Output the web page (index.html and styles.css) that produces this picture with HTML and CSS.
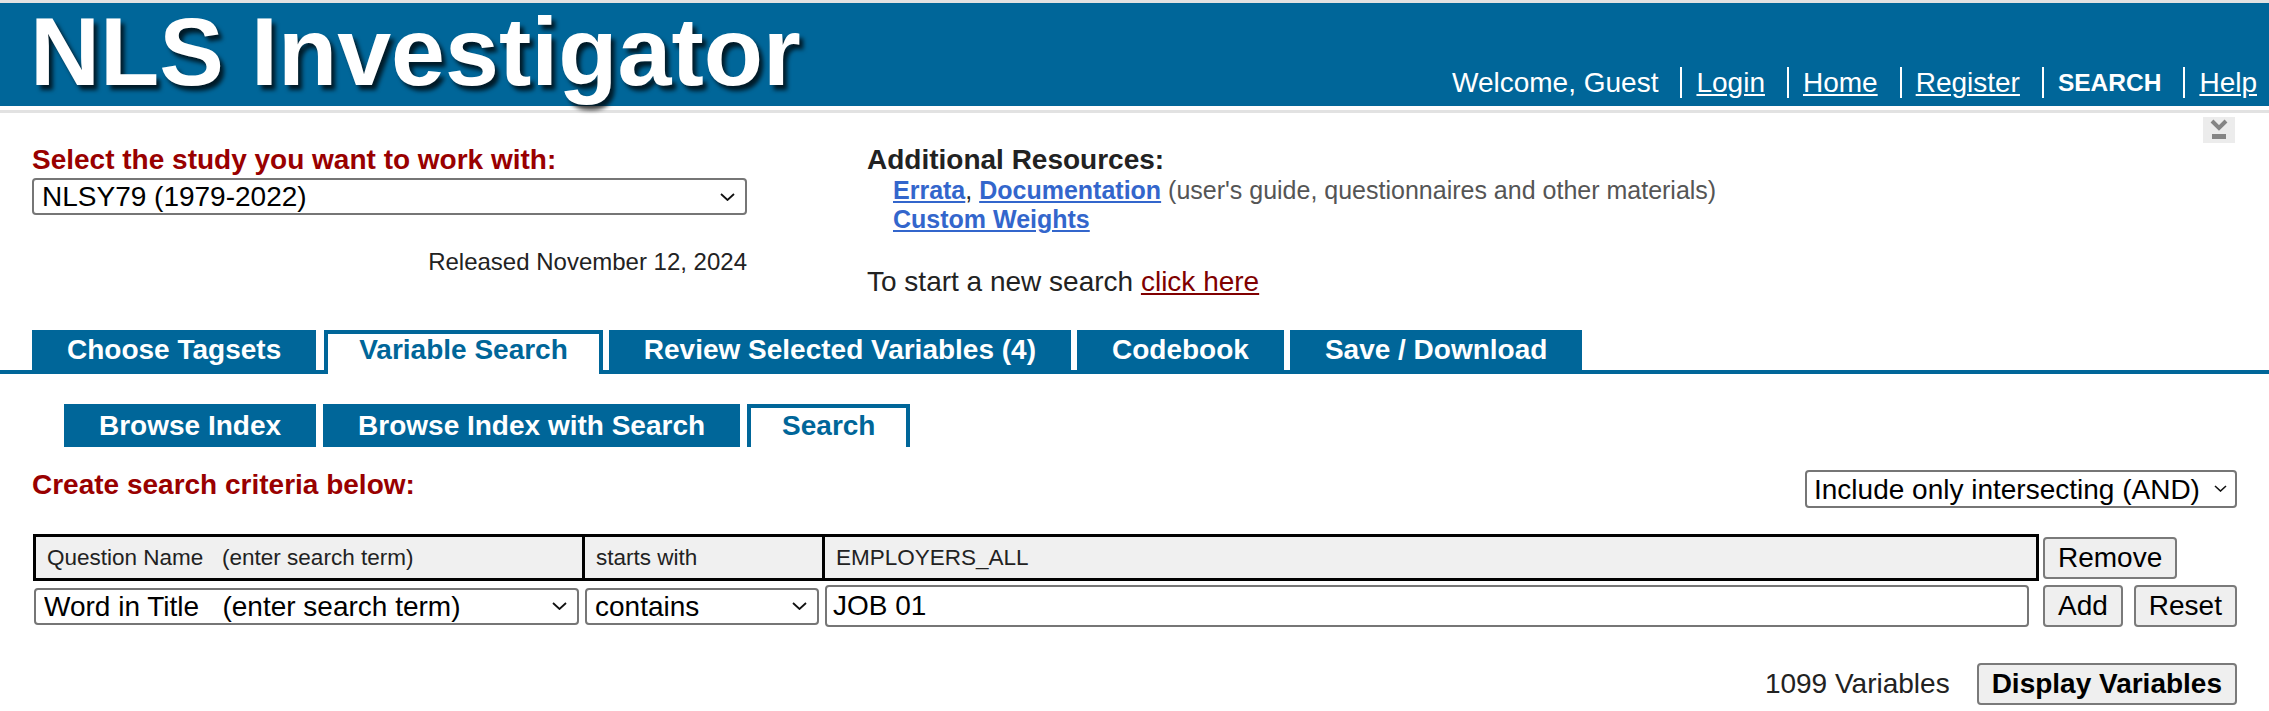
FILE: index.html
```html
<!DOCTYPE html>
<html lang="en">
  <head>
    <meta charset="UTF-8" />
    <title>NLS Investigator</title>
    <link rel="stylesheet" href="styles.css">
  </head>
  <body>
    <header class="masthead">
      <div class="brand">NLS Investigator</div>
      <nav class="usernav">
        <span class="navitem">Welcome, Guest</span>
        <a class="navitem" href="#">Login</a>
        <a class="navitem" href="#">Home</a>
        <a class="navitem" href="#">Register</a>
        <span class="navitem current">SEARCH</span>
        <a class="navitem" href="#">Help</a>
      </nav>
    </header>
    <div class="masthead-rule"></div>
    <div class="toolbar">
      <span class="collapse-btn">
        <svg width="32" height="26" viewBox="0 0 32 26">
          <rect width="32" height="26" fill="#ececec" />
          <path d="M9 4 L16 11 L23 4" fill="none" stroke="#858585" stroke-width="4" />
          <rect x="9" y="17" width="14" height="5" fill="#858585" />
        </svg>
      </span>
    </div>

    <section class="study">
      <div class="study-pick">
        <h3 class="label">Select the study you want to work with:</h3>
        <div class="selectbox study-select">
          <select><option>NLSY79 (1979-2022)</option></select>
          <svg class="chev" width="15" height="8" viewBox="0 0 15 8"><path d="M1 1 L7.5 7 L14 1" fill="none" stroke="#111" stroke-width="1.8" /></svg>
        </div>
        <p class="released">Released November 12, 2024</p>
      </div>
      <div class="resources">
        <h3>Additional Resources:</h3>
        <p class="res-line"><a href="#">Errata</a>, <a href="#">Documentation</a> <span class="note">(user's guide, questionnaires and other materials)</span></p>
        <p class="res-line"><a href="#">Custom Weights</a></p>
        <p class="restart">To start a new search <a href="#">click here</a></p>
      </div>
    </section>

    <ul class="tabs main-tabs">
      <li class="tab">Choose Tagsets</li>
      <li class="tab active">Variable Search</li>
      <li class="tab">Review Selected Variables (4)</li>
      <li class="tab">Codebook</li>
      <li class="tab">Save / Download</li>
    </ul>

    <ul class="tabs sub-tabs">
      <li class="tab">Browse Index</li>
      <li class="tab">Browse Index with Search</li>
      <li class="tab active">Search</li>
    </ul>

    <div class="criteria-head">
      <h3 class="label">Create search criteria below:</h3>
      <div class="selectbox mode-select">
        <select><option>Include only intersecting (AND)</option></select>
        <svg class="chev" width="13" height="7" viewBox="0 0 13 7"><path d="M1 1 L6.5 6 L12 1" fill="none" stroke="#111" stroke-width="1.6" /></svg>
      </div>
    </div>

    <div class="criteria">
      <div class="hcell">Question Name&nbsp;&nbsp; (enter search term)</div>
      <div class="hcell">starts with</div>
      <div class="hcell last">EMPLOYERS_ALL</div>
      <div class="actions"><button>Remove</button></div>

      <div class="selectbox field-select">
        <select><option>Word in Title&nbsp;&nbsp; (enter search term)</option></select>
        <svg class="chev" width="15" height="8" viewBox="0 0 15 8"><path d="M1 1 L7.5 7 L14 1" fill="none" stroke="#111" stroke-width="1.8" /></svg>
      </div>
      <div class="selectbox op-select">
        <select><option>contains</option></select>
        <svg class="chev" width="15" height="8" viewBox="0 0 15 8"><path d="M1 1 L7.5 7 L14 1" fill="none" stroke="#111" stroke-width="1.8" /></svg>
      </div>
      <input class="term" type="text" value="JOB 01" />
      <div class="actions"><button>Add</button><button>Reset</button></div>
    </div>

    <div class="results">
      <span class="count">1099 Variables</span>
      <button class="display-btn">Display Variables</button>
    </div>
  </body>
</html>
```

FILE: styles.css
```css
*{
    margin: 0;
    padding: 0;
    box-sizing: border-box;
}
body{
    font-family: "Liberation Sans", Arial, sans-serif;
    font-size: 28px;
    color: #222;
    background: #fff;
}

/* header */
.masthead{
    height: 106px;
    border-top: 3px solid #e2e2e2;
    background: #006699;
    display: flex;
    justify-content: space-between;
    align-items: flex-end;
}
.brand{
    align-self: flex-start;
    margin-left: 30px;
    padding-top: 1px;
    font-size: 97px;
    line-height: 96px;
    font-weight: bold;
    color: #fff;
    text-shadow: 4px 5px 4px rgba(0,0,0,0.75);
}
.usernav{
    display: flex;
    margin: 0 12px 8px 0;
}
.navitem{
    font-size: 28px;
    line-height: 31px;
    color: #fff;
    padding: 0 22px 0 14px;
    border-left: 2px solid #fff;
}
.navitem:first-child{
    border-left: 0;
}
.navitem:last-child{
    padding-right: 0;
}
.navitem.current{
    font-size: 24.5px;
    font-weight: bold;
}
.masthead-rule{
    height: 3px;
    margin-top: 4px;
    background: #e2e2e2;
}
.toolbar{
    height: 31px;
    padding: 4px 34px 0 0;
    display: flex;
    justify-content: flex-end;
}
.collapse-btn svg{
    display: block;
}

/* study + resources */
.study{
    display: grid;
    grid-template-columns: 715px auto;
    column-gap: 120px;
    padding: 0 32px;
}
.label{
    font-size: 28px;
    line-height: 32px;
    font-weight: bold;
    color: #990000;
}
.selectbox{
    position: relative;
}
.selectbox select{
    appearance: none;
    -webkit-appearance: none;
    width: 100%;
    height: 100%;
    font-family: "Liberation Sans", Arial, sans-serif;
    font-size: 28px;
    color: #000;
    background: #fff;
    border: 2px solid #767676;
    border-radius: 4px;
    padding: 0 40px 0 8px;
}
.chev{
    position: absolute;
    right: 12px;
    top: 50%;
    margin-top: -4px;
    pointer-events: none;
}
.study-select{
    margin-top: 2px;
    height: 37px;
}
.released{
    margin-top: 33px;
    font-size: 24px;
    text-align: right;
}
.resources h3{
    font-size: 28px;
    line-height: 32px;
    font-weight: bold;
}
.res-line{
    font-size: 25px;
    line-height: 29px;
    padding-left: 26px;
}
.res-line a{
    color: #3366cc;
    font-weight: bold;
}
.note{
    color: #555;
}
.restart{
    margin-top: 32px;
    line-height: 32px;
}
.restart a{
    color: #800000;
}

/* tabs */
.tabs{
    list-style: none;
    display: flex;
    align-items: flex-end;
    gap: 6px;
}
.tab{
    background: #006699;
    color: #fff;
    font-weight: bold;
    font-size: 28px;
    padding: 0 35px;
}
.main-tabs{
    margin-top: 32px;
    padding-left: 32px;
    border-bottom: 4px solid #006699;
}
.main-tabs .tab{
    line-height: 40px;
}
.main-tabs .tab.active{
    background: #fff;
    color: #006699;
    border: 4px solid #006699;
    border-bottom: 0;
    line-height: 32px;
    padding: 0 31px 8px;
    margin: 0 0 -4px 2px;
}
.sub-tabs{
    margin-top: 30px;
    padding-left: 64px;
    gap: 7px;
}
.sub-tabs .tab{
    line-height: 43px;
}
.sub-tabs .tab.active{
    background: #fff;
    color: #006699;
    border: 4px solid #006699;
    border-bottom: 0;
    line-height: 35px;
    padding: 0 31px 4px;
}

/* criteria */
.criteria-head{
    margin-top: 22px;
    padding: 0 32px;
    display: flex;
    justify-content: space-between;
    align-items: flex-start;
}
.mode-select{
    margin-top: 1px;
    width: 432px;
    height: 38px;
}
.mode-select select{
    padding: 0 22px 0 7px;
}
.mode-select .chev{
    right: 10px;
}
.criteria{
    margin-top: 26px;
    padding: 0 32px 0 33px;
    display: grid;
    grid-template-columns: 549px 240px 1fr 198px;
    grid-template-rows: 47px 42px;
    row-gap: 4px;
}
.hcell{
    background: #f0f0f0;
    border: 3px solid #000;
    border-right: 0;
    display: flex;
    align-items: center;
    padding-left: 11px;
    font-size: 22.5px;
    color: #222;
}
.hcell.last{
    border-right: 3px solid #000;
}
.actions{
    display: flex;
    align-items: center;
    gap: 11px;
    padding-left: 4px;
}
button{
    height: 42px;
    font-family: "Liberation Sans", Arial, sans-serif;
    font-size: 28px;
    color: #000;
    background: #efefef;
    border: 2px solid #7a7a7a;
    border-radius: 4px;
    padding: 0 13px;
}
.field-select{
    align-self: center;
    height: 37px;
    margin: 0 3px 0 1px;
}
.op-select{
    align-self: center;
    height: 37px;
    margin: 0 3px 0 3px;
}
.term{
    height: 42px;
    margin: 0 10px 0 3px;
    font-family: "Liberation Sans", Arial, sans-serif;
    font-size: 28px;
    color: #000;
    border: 2px solid #767676;
    border-radius: 4px;
    padding: 0 6px;
}

/* results */
.results{
    margin-top: 36px;
    padding-right: 32px;
    display: flex;
    justify-content: flex-end;
    align-items: center;
    gap: 27px;
}
.display-btn{
    font-weight: bold;
}
```
